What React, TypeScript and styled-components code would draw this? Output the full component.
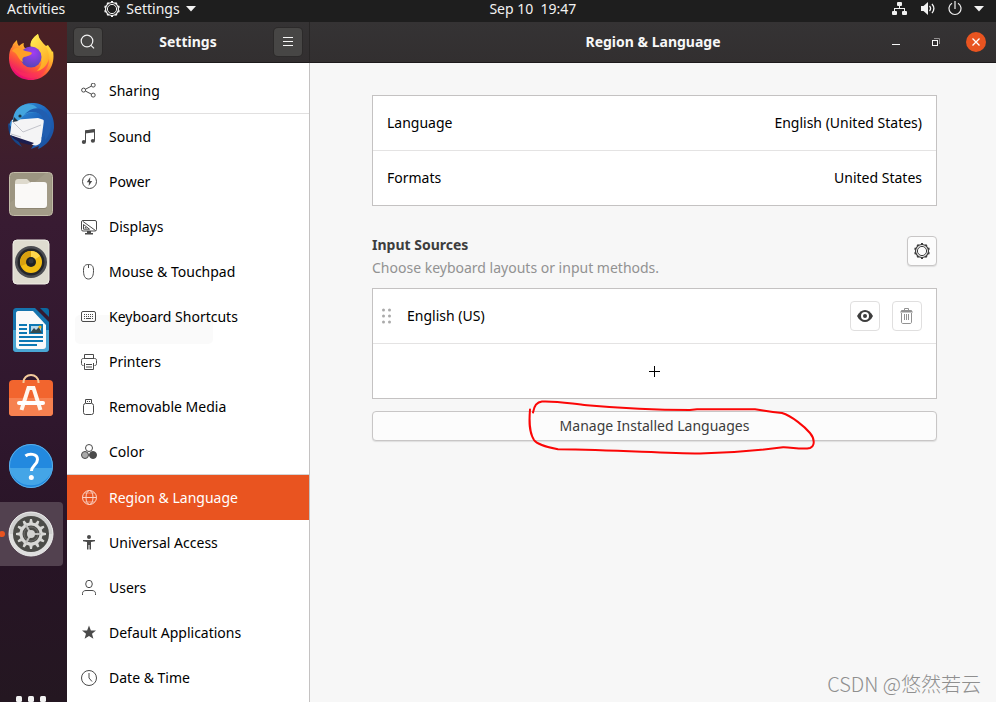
import React from "react";
import styled, { createGlobalStyle } from "styled-components";

const GlobalStyle = createGlobalStyle`
  *, *::before, *::after { box-sizing: border-box; }
  body { margin: 0; background: #f7f7f7; }
  body, button { font-family: "Noto Sans", "Noto Sans CJK SC", sans-serif; font-size: 14px; line-height: 20px; }
  button { margin: 0; padding: 0; border: 0; background: none; color: inherit; cursor: pointer; }
  h1, h2, p, ul { margin: 0; padding: 0; }
  ul { list-style: none; }
  svg { display: block; flex: none; }
`;

const Desktop = styled.div`
  position: relative;
  display: flex;
  flex-direction: column;
  height: 100vh;
  overflow: hidden;
`;

/* Top bar */
const TopBar = styled.header`
  display: flex;
  flex: none;
  height: 22px;
  padding-bottom: 5px;
  align-items: center;
  background: #1e1e1e;
  color: #f2f2f2;
`;
const BarGroup = styled.div<{ $share: number; $end?: boolean }>`
  display: flex;
  flex: ${(p) => p.$share} 1 0;
  align-items: center;
  justify-content: ${(p) => (p.$end ? "flex-end" : "flex-start")};
  gap: ${(p) => (p.$end ? "12px" : "39px")};
  padding: ${(p) => (p.$end ? "0 12px 0 0" : "0 0 0 7px")};
`;
const BarButton = styled.button<{ $wide?: boolean }>`
  display: flex;
  align-items: center;
  gap: ${(p) => (p.$wide ? "12px" : "6px")};
`;
const Clock = styled.button`
  white-space: pre;
`;

/* Dock */
const Body = styled.div`
  display: flex;
  flex: 1;
  min-height: 0;
`;
const Dock = styled.nav`
  display: flex;
  flex: none;
  flex-direction: column;
  gap: 4px;
  width: 67px;
  padding-top: 4px;
  overflow: hidden;
  background: linear-gradient(#4b2023 0, #42202a 90px, #381b32 200px, #2f172d 400px, #271425 540px, #241721 100%);
`;
const DockItem = styled.button<{ $active?: boolean }>`
  display: flex;
  position: relative;
  flex: none;
  align-items: center;
  justify-content: center;
  width: 63px;
  height: 64px;
  padding-right: 2px;
  border-radius: 0 4px 4px 0;
  background: ${(p) => (p.$active ? "#52414f" : "none")};
`;
const RunningDot = styled.span`
  position: absolute;
  top: 29px;
  left: -1px;
  width: 6px;
  height: 6px;
  border-radius: 3px;
  background: #e95420;
`;
const AppsButton = styled.button`
  display: flex;
  flex: none;
  justify-content: center;
  width: 63px;
  height: 23px;
  margin-top: auto;
  padding: 17px 2px 0 0;
  overflow: hidden;
`;

/* Settings window */
const Window = styled.div`
  display: flex;
  flex: 1;
  min-width: 0;
`;
const HeaderBar = styled.div<{ $main?: boolean }>`
  display: grid;
  flex: none;
  grid-template-columns: 1fr auto 1fr;
  align-items: center;
  height: 41px;
  padding: ${(p) => (p.$main ? "0 10px" : "0 7px")};
  border-bottom: 1px solid #1d1b1c;
  background: linear-gradient(#353334, #322f30);
  color: #f7f7f7;
`;
const Title = styled.h1`
  grid-column: 2;
  font-size: 14px;
  font-weight: 700;
  line-height: 20px;
`;
const HeaderButton = styled.button<{ $end?: boolean }>`
  display: flex;
  align-items: center;
  justify-content: center;
  justify-self: ${(p) => (p.$end ? "end" : "start")};
  width: 28px;
  height: 28px;
  border-radius: 4px;
  background: #474645;
  box-shadow: 0 0 0 1px #2c2a2a;
`;
const Controls = styled.div`
  display: flex;
  gap: 20px;
  align-items: center;
  justify-content: flex-end;
`;
const WindowButton = styled.button<{ $close?: boolean }>`
  display: flex;
  align-items: center;
  justify-content: center;
  width: 20px;
  height: 20px;
  border-radius: 10px;
  background: ${(p) => (p.$close ? "#e95420" : "none")};
`;

const Side = styled.div`
  display: flex;
  flex: none;
  flex-direction: column;
  width: 243px;
  border-right: 1px solid #c4c2c2;
  background: #fff;
`;
const SideHead = styled(HeaderBar)`
  margin-right: -1px;
  border-right: 1px solid #282626;
`;
const NavList = styled.ul`
  padding-top: 5px;
`;
const NavItem = styled.li<{ $line?: string }>`
  border-bottom: ${(p) => (p.$line ? `1px solid ${p.$line}` : "0")};
`;
const NavButton = styled.button<{ $active?: boolean; $ghost?: boolean }>`
  display: flex;
  position: relative;
  gap: 12px;
  align-items: center;
  width: 100%;
  height: 45px;
  padding: 0 14px;
  background: ${(p) => (p.$active ? "#e95420" : "none")};
  color: ${(p) => (p.$active ? "#fff" : "#000")};
  text-align: left;
  > svg { color: ${(p) => (p.$active ? "#fbd5c8" : "#4a4a4a")}; z-index: 1; }
  > span { z-index: 1; }
  &::before {
    content: "";
    display: ${(p) => (p.$ghost ? "block" : "none")};
    position: absolute;
    top: 21px;
    left: 8px;
    width: 138px;
    height: 29px;
    border-radius: 5px;
    background: #fafafa;
  }
`;

const Main = styled.main`
  display: flex;
  flex: 1;
  flex-direction: column;
  min-width: 0;
  background: #f7f7f7;
`;
const Content = styled.div`
  display: flex;
  flex-direction: column;
  padding: 32px 59px 0 62px;
`;
const Card = styled.div`
  border: 1px solid #c4c2c2;
  background: #fff;
  color: #000;
  > * + * { border-top: 1px solid #e4e3e3; }
`;
const SettingRow = styled.button`
  display: flex;
  align-items: center;
  justify-content: space-between;
  width: 100%;
  height: 54px;
  padding: 0 14px;
  & + & { height: 55px; }
`;
const SectionHead = styled.div`
  display: flex;
  align-items: center;
  justify-content: space-between;
  padding: 28px 0 20px;
`;
const SectionTitle = styled.h2`
  color: #3d3d3d;
  font-size: 14px;
  font-weight: 700;
  line-height: 22px;
`;
const Hint = styled.p`
  color: #929292;
  line-height: 24px;
  margin-bottom: -12px;
`;
const IconButton = styled.button<{ $quiet?: boolean }>`
  display: flex;
  flex: none;
  align-items: center;
  justify-content: center;
  width: 30px;
  height: 30px;
  border: 1px solid ${(p) => (p.$quiet ? "#e0dfdf" : "#c8c6c6")};
  border-radius: 4px;
  background: ${(p) => (p.$quiet ? "#fff" : "#fcfcfc")};
  box-shadow: ${(p) => (p.$quiet ? "none" : "0 1px 1px #dedede")};
  color: #3d3d3d;
  &:disabled { color: #929292; }
`;
const SourceRow = styled.div`
  display: flex;
  gap: 12px;
  align-items: center;
  height: 54px;
  padding: 0 14px 0 8px;
  > svg { color: #aaa; }
  > span { flex: 1; }
`;
const AddButton = styled.button`
  display: flex;
  align-items: center;
  justify-content: center;
  width: 100%;
  height: 55px;
`;
const ManageWrap = styled.div`
  position: relative;
  margin-top: 12px;
`;
const ManageButton = styled.button`
  display: block;
  width: 100%;
  height: 30px;
  border: 1px solid #c8c6c6;
  border-radius: 4px;
  background: #fcfcfc;
  box-shadow: 0 1px 1px #dedede;
  color: #3d3d3d;
`;
const Scribble = styled.svg`
  position: absolute;
  top: -11px;
  left: calc(50% - 127px);
  pointer-events: none;
`;
const Watermark = styled.div`
  position: absolute;
  right: 15px;
  bottom: 4px;
  color: #8f8f8f;
  font-family: "Noto Sans CJK SC", sans-serif;
  font-size: 20px;
  font-weight: 300;
  line-height: 28px;
`;

const Line = ({ children, size = 16, width = 1 }: { children: React.ReactNode; size?: number; width?: number }) => (
  <svg width={size} height={size} viewBox="0 0 16 16" fill="none" stroke="currentColor" strokeWidth={width} aria-hidden="true">
    {children}
  </svg>
);

const teeth = (n: number) => Array.from({ length: n }, (_, i) => (i * 360) / n);

const Cog = () => (
  <Line>
    <circle cx="8" cy="8" r="4.6" />
    <circle cx="8" cy="8" r="6.5" strokeWidth="1.2" />
    {teeth(10).map((a) => (
      <path key={a} d="M7 .9h2" strokeWidth="1.6" transform={`rotate(${a} 8 8)`} />
    ))}
  </Line>
);

const icons: Record<string, React.ReactNode> = {
  sharing: (
    <Line>
      <circle cx="2.6" cy="7.1" r="2" /><circle cx="12.2" cy="2.1" r="2" /><circle cx="12.2" cy="12.1" r="2" />
      <path d="M4.5 6.2l5.8-3M4.5 8.1l5.8 3" />
    </Line>
  ),
  sound: (
    <Line>
      <path d="M4.5 13V1.8L13.5.6V11.6" /><path d="M4 1.5L14 .2v3L4 4.4z" fill="currentColor" stroke="none" />
      <ellipse cx="2.9" cy="13" rx="2.1" ry="1.9" fill="currentColor" stroke="none" />
      <ellipse cx="11.9" cy="11.8" rx="2.1" ry="1.9" fill="currentColor" stroke="none" />
    </Line>
  ),
  power: (
    <Line>
      <circle cx="8.5" cy="7.5" r="7" />
      <path d="M9.3 3L5.8 8.3h2.2L7.7 12l3.5-5H9z" fill="currentColor" stroke="none" />
    </Line>
  ),
  displays: (
    <Line>
      <rect x=".5" y="1.5" width="15" height="10.5" rx="1.5" />
      <path d="M2 2.5l12.5 9" /><path d="M2.5 5.5v4.7h6z" /><path d="M4.3 8v1h1.2" />
      <path d="M6 12h4v2h2v1.4H4V14h2z" fill="currentColor" stroke="none" />
    </Line>
  ),
  mouse: (
    <Line>
      <path d="M2.5 6.5C2.5 2 4 .5 7.5.5s5 1.5 5 6-1 8.5-5 8.5-5-4-5-8.5z" /><path d="M7.5.5V4" />
    </Line>
  ),
  keyboard: (
    <Line>
      <rect x=".5" y="2.5" width="14" height="10" rx="1.5" />
      <path d="M3 5.500h10M3 7.500h10" strokeDasharray="1 1" /><path d="M3 9.500h1M5 9.500h5M11 9.500h1" />
    </Line>
  ),
  printer: (
    <Line>
      <path d="M3.5 4.5v-4h9v4M2.500 11.500c-1.500 0-2-.5-2-2v-3c0-1.500.5-2 2-2h11c1.500 0 2 .5 2 2v3c0 1.500-.5 2-2 2" />
      <path d="M3.5 9v6.500h9V9" /><path d="M5 10.500h6M5 13h6" />
    </Line>
  ),
  removable: (
    <Line>
      <rect x="2.5" y="4.5" width="10" height="11" rx="2" /><path d="M4.500 4V.5h6V4" /><path d="M6 2.500h1M8 2.500h1" />
    </Line>
  ),
  color: (
    <Line>
      <circle cx="8" cy="4" r="3.5" />
      <circle cx="4" cy="11" r="3.5" fill="#aaa" /><circle cx="12" cy="11" r="3.5" fill="currentColor" />
    </Line>
  ),
  region: (
    <Line>
      <circle cx="8.5" cy="7.5" r="7" /><ellipse cx="8.5" cy="7.5" rx="3.5" ry="7" /><path d="M1.500 7.500h14" />
      <path d="M3.300 3h10.400M3.300 12h10.400" strokeWidth=".6" />
    </Line>
  ),
  access: (
    <Line>
      <g fill="currentColor" stroke="none">
        <circle cx="8" cy="2" r="2" /><path d="M2 5h12v1.300L10 7v7.500H8.500V10h-1v4.500H6V7l-4-.7z" />
      </g>
    </Line>
  ),
  users: (
    <Line>
      <ellipse cx="8" cy="4" rx="3.3" ry="3.7" /><path d="M1.500 15v-1.500c0-2 1.500-3 3.500-3h6c2 0 3.500 1 3.500 3V15" />
    </Line>
  ),
  star: (
    <Line>
      <path d="M8 .5l1.900 4.900 5.100.2-4 3.200 1.400 5L8 11l-4.400 2.800 1.400-5-4-3.200 5.100-.2z" fill="currentColor" stroke="none" />
    </Line>
  ),
  clock: (
    <Line>
      <circle cx="8" cy="8" r="7.5" /><path d="M8 3v5l3 3.500" />
    </Line>
  ),
};

const nav: { icon: string; label: string; line?: string; active?: boolean; ghost?: boolean }[] = [
  { icon: "sharing", label: "Sharing", line: "#e1e0e0" },
  { icon: "sound", label: "Sound" },
  { icon: "power", label: "Power" },
  { icon: "displays", label: "Displays" },
  { icon: "mouse", label: "Mouse & Touchpad" },
  { icon: "keyboard", label: "Keyboard Shortcuts", ghost: true },
  { icon: "printer", label: "Printers" },
  { icon: "removable", label: "Removable Media" },
  { icon: "color", label: "Color", line: "#d4d4d4" },
  { icon: "region", label: "Region & Language", active: true },
  { icon: "access", label: "Universal Access" },
  { icon: "users", label: "Users" },
  { icon: "star", label: "Default Applications" },
  { icon: "clock", label: "Date & Time" },
];

const Firefox = () => (
  <svg width="48" height="48" viewBox="0 0 48 48" aria-hidden="true">
    <defs>
      <linearGradient id="ffBody" x1=".8" y1=".1" x2=".3" y2="1">
        <stop offset="0" stopColor="#fff044" /><stop offset=".35" stopColor="#ffb02c" />
        <stop offset=".65" stopColor="#ff5a36" /><stop offset="1" stopColor="#e8027c" />
      </linearGradient>
      <radialGradient id="ffGlobe" cx=".6" cy=".3" r=".7">
        <stop offset="0" stopColor="#a23cf5" /><stop offset="1" stopColor="#5746b8" />
      </radialGradient>
      <linearGradient id="ffFlame" x1="0" y1="0" x2=".5" y2="1">
        <stop offset="0" stopColor="#fff35a" /><stop offset="1" stopColor="#ffab24" />
      </linearGradient>
    </defs>
    <g transform="translate(0 -1)">
      <path d="M5 14C6 10 9 8 10 7c0 3 1 5 2 6 2-2 4-3 5-3-1 2 0 4 1 5h6C22 8 28 3 31 1c1 6 4 9 8 12l2-1c1 2 4 5 4 7l1-1c3 16-8 29-22 29C11 47 2 38 2 25c0-5 1-9 3-11z" fill="url(#ffBody)" />
      <path d="M24 14C22 8 28 3 31 1c1 7 8 10 10 17 3 10-2 18-11 20 7-6 7-18-6-24z" fill="url(#ffFlame)" />
      <circle cx="24" cy="24" r="10.5" fill="url(#ffGlobe)" />
      <path d="M5 18c3-4 7-4 11-1 3 2 7 1 9 3-1 3-5 3-8 4-2 1-2 3-1 5-5-2-5-9-11-11z" fill="#ff9f27" />
      <path d="M3 26c2 10 12 16 22 14 9-1 15-7 17-14 0 11-8 19-18 19S4 37 3 26z" fill="#ff3059" opacity=".5" />
    </g>
  </svg>
);

const Thunderbird = () => (
  <svg width="50" height="50" viewBox="0 0 50 50" aria-hidden="true">
    <defs>
      <linearGradient id="tbBody" x1="0" y1="0" x2="1" y2="1">
        <stop offset="0" stopColor="#3ba1e0" /><stop offset=".5" stopColor="#1d65bd" /><stop offset="1" stopColor="#1b4d98" />
      </linearGradient>
    </defs>
    <path d="M8 17C10 7 18 1 28 2c13 1 21 12 20 25-1 10-8 18-16 21l1-3-8 3 3-5L5 33C2 28 2 21 8 17z" fill="url(#tbBody)" />
    <path d="M2 22c0 10 3 18 14 24-3-5-6-9-7-15z" fill="#164587" />
    <path d="M6 19l26-2 6 2-3 22c-2 3-5 4-8 3L4 34z" fill="#f4f4f5" />
    <path d="M6 20l11 11 18-7M5 33l10 3" fill="none" stroke="#c2c3ca" />
    <path d="M4 34l24 8-3 2C17 43 9 40 4 34z" fill="#1c1d4e" />
    <path d="M7 20C7 11 12 4 22 3c6 0 11 4 12 10-6-3-12-2-17 2-3 3-4 5-7 5z" fill="#43a5de" />
    <path d="M18 14c5-4 11-4 17 0 5 6 4 17 0 24l4-4v5c8-8 8-23-1-29-6-5-14-3-20 4z" fill="#215eb0" />
    <circle cx="14" cy="15" r="1.6" fill="#20343f" /><path d="M8 16l4 4-5 1z" fill="#243341" />
  </svg>
);

const Files = () => (
  <svg width="46" height="46" viewBox="0 0 46 46" aria-hidden="true">
    <rect x="1.5" y="1.5" width="43" height="43" rx="4" fill="#9c9581" stroke="#c3bda9" />
    <path d="M2 32L38 2h5v42H3z" fill="#aaa48f" opacity=".5" />
    <path d="M7 12c0-3 1-4 3-4h9l3 3v8H7z" fill="#dedacd" />
    <rect x="7" y="13" width="32" height="25" rx="3" fill="#77705e" opacity=".5" />
    <path d="M7 13h12l4-2h13c2 0 3 1 3 3v20c0 2-1 3-3 3H10c-2 0-3-1-3-3z" fill="#faf9f7" />
  </svg>
);

const Rhythmbox = () => (
  <svg width="46" height="46" viewBox="0 0 46 46" aria-hidden="true">
    <rect x="5" y="1" width="36" height="44" rx="4" fill="#dfdcd0" stroke="#f0eee6" />
    <circle cx="23" cy="23" r="16" fill="#4c4d52" /><circle cx="23" cy="23" r="13.5" fill="#24262a" />
    <circle cx="23" cy="23" r="11" fill="#f2bd13" /><path d="M23 12a11 11 0 0 0-10 15l10-4z" fill="#d8a10f" />
    <path d="M23 12a11 11 0 0 1 9 5l-9 6z" fill="#ffd64b" />
    <circle cx="23" cy="23" r="5" fill="#202225" /><circle cx="23" cy="22" r="2.5" fill="#34373b" />
  </svg>
);

const Writer = () => (
  <svg width="46" height="46" viewBox="0 0 46 46" aria-hidden="true">
    <path d="M9 1h18l14 14v26c0 3-1 4-4 4H9c-3 0-4-1-4-4V5c0-3 1-4 4-4z" fill="#1674ae" />
    <path d="M5 23h36v18c0 3-1 4-4 4H9c-3 0-4-1-4-4z" fill="#4aa6d3" />
    <path d="M32 1h6c2 0 3 1 3 3v6z" fill="#0c679e" />
    <path d="M10 4h15l13 14v21c0 2-1 3-3 3H11c-2 0-3-1-3-3V6c0-1 1-2 2-2z" fill="#fafafa" />
    <path d="M11 18h8M11 22h8M11 26h8M11 30h24M11 34h24M11 38h18" stroke="#0d78b4" strokeWidth="2" />
    <rect x="22" y="18" width="12" height="8" fill="#b8d9ed" stroke="#0d78b4" strokeWidth="2" />
    <path d="M22 26l4-5 2 2 3-3 3 6z" fill="#34494e" /><circle cx="32" cy="20" r="1.5" fill="#f4b11a" />
  </svg>
);

const Software = () => (
  <svg width="46" height="46" viewBox="0 0 46 46" overflow="visible" aria-hidden="true">
    <rect x="1" y="5" width="44" height="36" rx="4" fill="#f2652e" />
    <path d="M1 23h44v14c0 3-1 4-4 4H5c-3 0-4-1-4-4z" fill="#f68150" />
    <path d="M15.5 8V7a7.500 7 0 0 1 15 0v1" fill="none" stroke="#f4cb9c" strokeWidth="2" />
    <path d="M13.500 35l7-22h5l7 22" fill="none" stroke="#fff7ef" strokeWidth="4" />
    <path d="M11 28h24" stroke="#fff" strokeWidth="4" strokeLinecap="round" />
  </svg>
);

const Help = () => (
  <svg width="46" height="46" viewBox="0 0 46 46" aria-hidden="true">
    <circle cx="23" cy="23" r="22" fill="#2389df" />
    <path d="M1.500 25h43a22 22 0 0 1-43 0z" fill="#44a5e7" />
    <circle cx="23" cy="23" r="21.5" fill="none" stroke="#5aafe8" />
    <path d="M17.500 13c3-2.500 12-3 12 3.500 0 5-6 6-6 11.500" fill="none" stroke="#fff" strokeWidth="3" />
    <circle cx="23.3" cy="34.5" r="2.5" fill="#fff" />
  </svg>
);

const SettingsApp = () => (
  <svg width="46" height="46" viewBox="0 0 46 46" aria-hidden="true">
    <circle cx="23" cy="23" r="22" fill="#dedede" /><path d="M1 23a22 22 0 0 1 44 0z" fill="#cfcfcf" />
    <circle cx="23" cy="23" r="22" fill="none" stroke="#ededed" />
    <circle cx="23" cy="23" r="18" fill="#4b4b48" />
    {teeth(12).map((a) => (
      <path key={a} d="M21.200 12l.8-4h2l.8 4z" fill="#d7d7d5" transform={`rotate(${a} 23 23)`} />
    ))}
    <circle cx="23" cy="23" r="10" fill="none" stroke="#d7d7d5" strokeWidth="3" />
    <circle cx="23" cy="23" r="7" fill="none" stroke="#6c6c69" />
    <path d="M23 23h10M23 23l-5-9M23 23l-5 9" stroke="#bdbdbb" strokeWidth="2" />
    <circle cx="23" cy="23" r="4" fill="#d2d2d0" />
  </svg>
);

const Caret = () => (
  <svg width="10" height="6" viewBox="0 0 10 6" aria-hidden="true"><path d="M0 0h10L5 5.500z" fill="#f2f2f2" /></svg>
);

const dock = [
  { label: "Firefox", art: <Firefox /> },
  { label: "Thunderbird Mail", art: <Thunderbird /> },
  { label: "Files", art: <Files /> },
  { label: "Rhythmbox", art: <Rhythmbox /> },
  { label: "LibreOffice Writer", art: <Writer /> },
  { label: "Ubuntu Software", art: <Software /> },
  { label: "Help", art: <Help /> },
  { label: "Settings", art: <SettingsApp />, active: true },
];

export default function App() {
  return (
    <Desktop>
      <GlobalStyle />
      <TopBar>
        <BarGroup $share={542}>
          <BarButton>Activities</BarButton>
          <BarButton>
            <Cog />
            Settings
            <Caret />
          </BarButton>
        </BarGroup>
        <Clock>{"Sep 10  19:47"}</Clock>
        <BarGroup $share={458} $end>
          <BarButton aria-label="Network">
            <svg width="16" height="16" viewBox="0 0 16 16" fill="#f2f2f2" aria-hidden="true">
              <rect x="5" y="1" width="5" height="4" rx="1" /><rect x="0" y="10" width="5" height="4" rx="1" /><rect x="10" y="10" width="5" height="4" rx="1" />
              <path d="M7 5h1v2h5v3h-1V8H3v2H2V7h5z" />
            </svg>
          </BarButton>
          <BarButton aria-label="Volume">
            <svg width="16" height="16" viewBox="0 0 16 16" fill="none" stroke="#f2f2f2" aria-hidden="true">
              <path d="M1 5h2.500L8 1v13L3.500 10H1z" fill="#f2f2f2" stroke="none" />
              <path d="M9.500 5c1.300 1.500 1.300 3.500 0 5M12 3c2.500 3 2.500 6 0 9" strokeWidth="1.3" />
            </svg>
          </BarButton>
          <BarButton $wide aria-label="System">
            <svg width="14" height="16" viewBox="0 0 14 16" fill="none" stroke="#f2f2f2" strokeWidth="1.2" aria-hidden="true">
              <path d="M4 2.300a6 6 0 1 0 6 0M7 0v8" />
            </svg>
            <Caret />
          </BarButton>
        </BarGroup>
      </TopBar>
      <Body>
        <Dock aria-label="Dock">
          {dock.map((d) => (
            <DockItem key={d.label} aria-label={d.label} $active={d.active}>
              {d.active && <RunningDot />}
              {d.art}
            </DockItem>
          ))}
          <AppsButton aria-label="Show Applications">
            <svg width="30" height="30" viewBox="0 0 30 30" fill="#f2f2f2" aria-hidden="true">
              {[0, 12, 24].map((y) => [0, 12, 24].map((x) => <rect key={`${x}-${y}`} x={x} y={y} width="6" height="6" rx="1.5" />))}
            </svg>
          </AppsButton>
        </Dock>
        <Window>
          <Side>
            <SideHead>
              <HeaderButton aria-label="Search">
                <svg width="16" height="16" viewBox="0 0 16 16" fill="none" stroke="#f2f2f2" strokeWidth="1.2" aria-hidden="true">
                  <circle cx="7" cy="7" r="5.8" /><path d="M11 11.300l3 3" />
                </svg>
              </HeaderButton>
              <Title as="h2">Settings</Title>
              <HeaderButton $end aria-label="Menu">
                <svg width="16" height="16" viewBox="0 0 16 16" stroke="#f7f7f7" aria-hidden="true">
                  <path d="M3 3.500h10M3 7.500h10M3 11.500h10" />
                </svg>
              </HeaderButton>
            </SideHead>
            <NavList>
              {nav.map((n) => (
                <NavItem key={n.label} $line={n.line}>
                  <NavButton $active={n.active} $ghost={n.ghost}>
                    {icons[n.icon]}
                    <span>{n.label}</span>
                  </NavButton>
                </NavItem>
              ))}
            </NavList>
          </Side>
          <Main>
            <HeaderBar $main>
              <Title>Region &amp; Language</Title>
              <Controls>
                <WindowButton aria-label="Minimize">
                  <svg width="8" height="8" viewBox="0 0 8 8" aria-hidden="true"><path d="M0 6h8v1H0z" fill="#f7f7f7" /></svg>
                </WindowButton>
                <WindowButton aria-label="Restore">
                  <svg width="8" height="8" viewBox="0 0 8 8" fill="none" aria-hidden="true">
                    <path d="M2 .5h5.500V6" stroke="#929090" /><rect x=".5" y="2.5" width="5" height="5" stroke="#f7f7f7" />
                  </svg>
                </WindowButton>
                <WindowButton $close aria-label="Close">
                  <svg width="8" height="8" viewBox="0 0 8 8" aria-hidden="true"><path d="M.5.5l7 7M7.500.5l-7 7" stroke="#fff" strokeWidth="1.3" /></svg>
                </WindowButton>
              </Controls>
            </HeaderBar>
            <Content>
              <Card>
                <SettingRow><span>Language</span><span>English (United States)</span></SettingRow>
                <SettingRow><span>Formats</span><span>United States</span></SettingRow>
              </Card>
              <SectionHead>
                <div>
                  <SectionTitle>Input Sources</SectionTitle>
                  <Hint>Choose keyboard layouts or input methods.</Hint>
                </div>
                <IconButton aria-label="Input source options"><Cog /></IconButton>
              </SectionHead>
              <Card>
                <SourceRow>
                  <svg width="14" height="16" viewBox="0 0 14 16" fill="currentColor" aria-hidden="true">
                    {[2, 8, 14].map((y) => [2.5, 8.5].map((x) => <circle key={`${x}-${y}`} cx={x} cy={y} r="1.5" />))}
                  </svg>
                  <span>English (US)</span>
                  <IconButton $quiet aria-label="Show layout">
                    <svg width="16" height="16" viewBox="0 0 16 16" aria-hidden="true">
                      <path d="M0 8c2-4 5-6 8-6s6 2 8 6c-2 4-5 6-8 6S2 12 0 8z" fill="currentColor" />
                      <circle cx="8" cy="8" r="4" fill="#fff" /><circle cx="8" cy="8" r="2" fill="currentColor" />
                    </svg>
                  </IconButton>
                  <IconButton $quiet disabled aria-label="Remove">
                    <Line>
                      <path d="M2.500 5v9c0 1 .5 1.500 1.500 1.500h7c1 0 1.500-.5 1.500-1.500V5M5.500 6v6M7.500 6v6M9.500 6v6M5.500 2V.5h4V2" />
                      <path d="M2.500 2h10l1.500 2.500H1z" fill="currentColor" stroke="none" />
                    </Line>
                  </IconButton>
                </SourceRow>
                <AddButton aria-label="Add input source">
                  <svg width="11" height="11" viewBox="0 0 11 11" aria-hidden="true"><path d="M5 0h1v5h5v1H6v5H5V6H0V5h5z" /></svg>
                </AddButton>
              </Card>
              <ManageWrap>
                <ManageButton>Manage Installed Languages</ManageButton>
                <Scribble width="290" height="56" viewBox="0 0 290 56" fill="none" stroke="#fb0606" strokeWidth="2" strokeLinecap="round" strokeLinejoin="round" aria-hidden="true">
                  <path d="M5 12.500C6 6 9 2 14 1.500C30 .8 44 4 59 5.300C78 7 112 10 162 10L169 9.300H227C234 10 240 12 254 13C264 16 277 27 282 33C287 39 287 46 282 48C274 50 263 47 255 47.300C235 50 205 53 172 53.500C130 53 90 50 30 49.300C17 47 8 43 6 40C1 32 1 22 2 9.500" />
                </Scribble>
              </ManageWrap>
            </Content>
          </Main>
        </Window>
      </Body>
      <Watermark>CSDN @悠然若云</Watermark>
    </Desktop>
  );
}
